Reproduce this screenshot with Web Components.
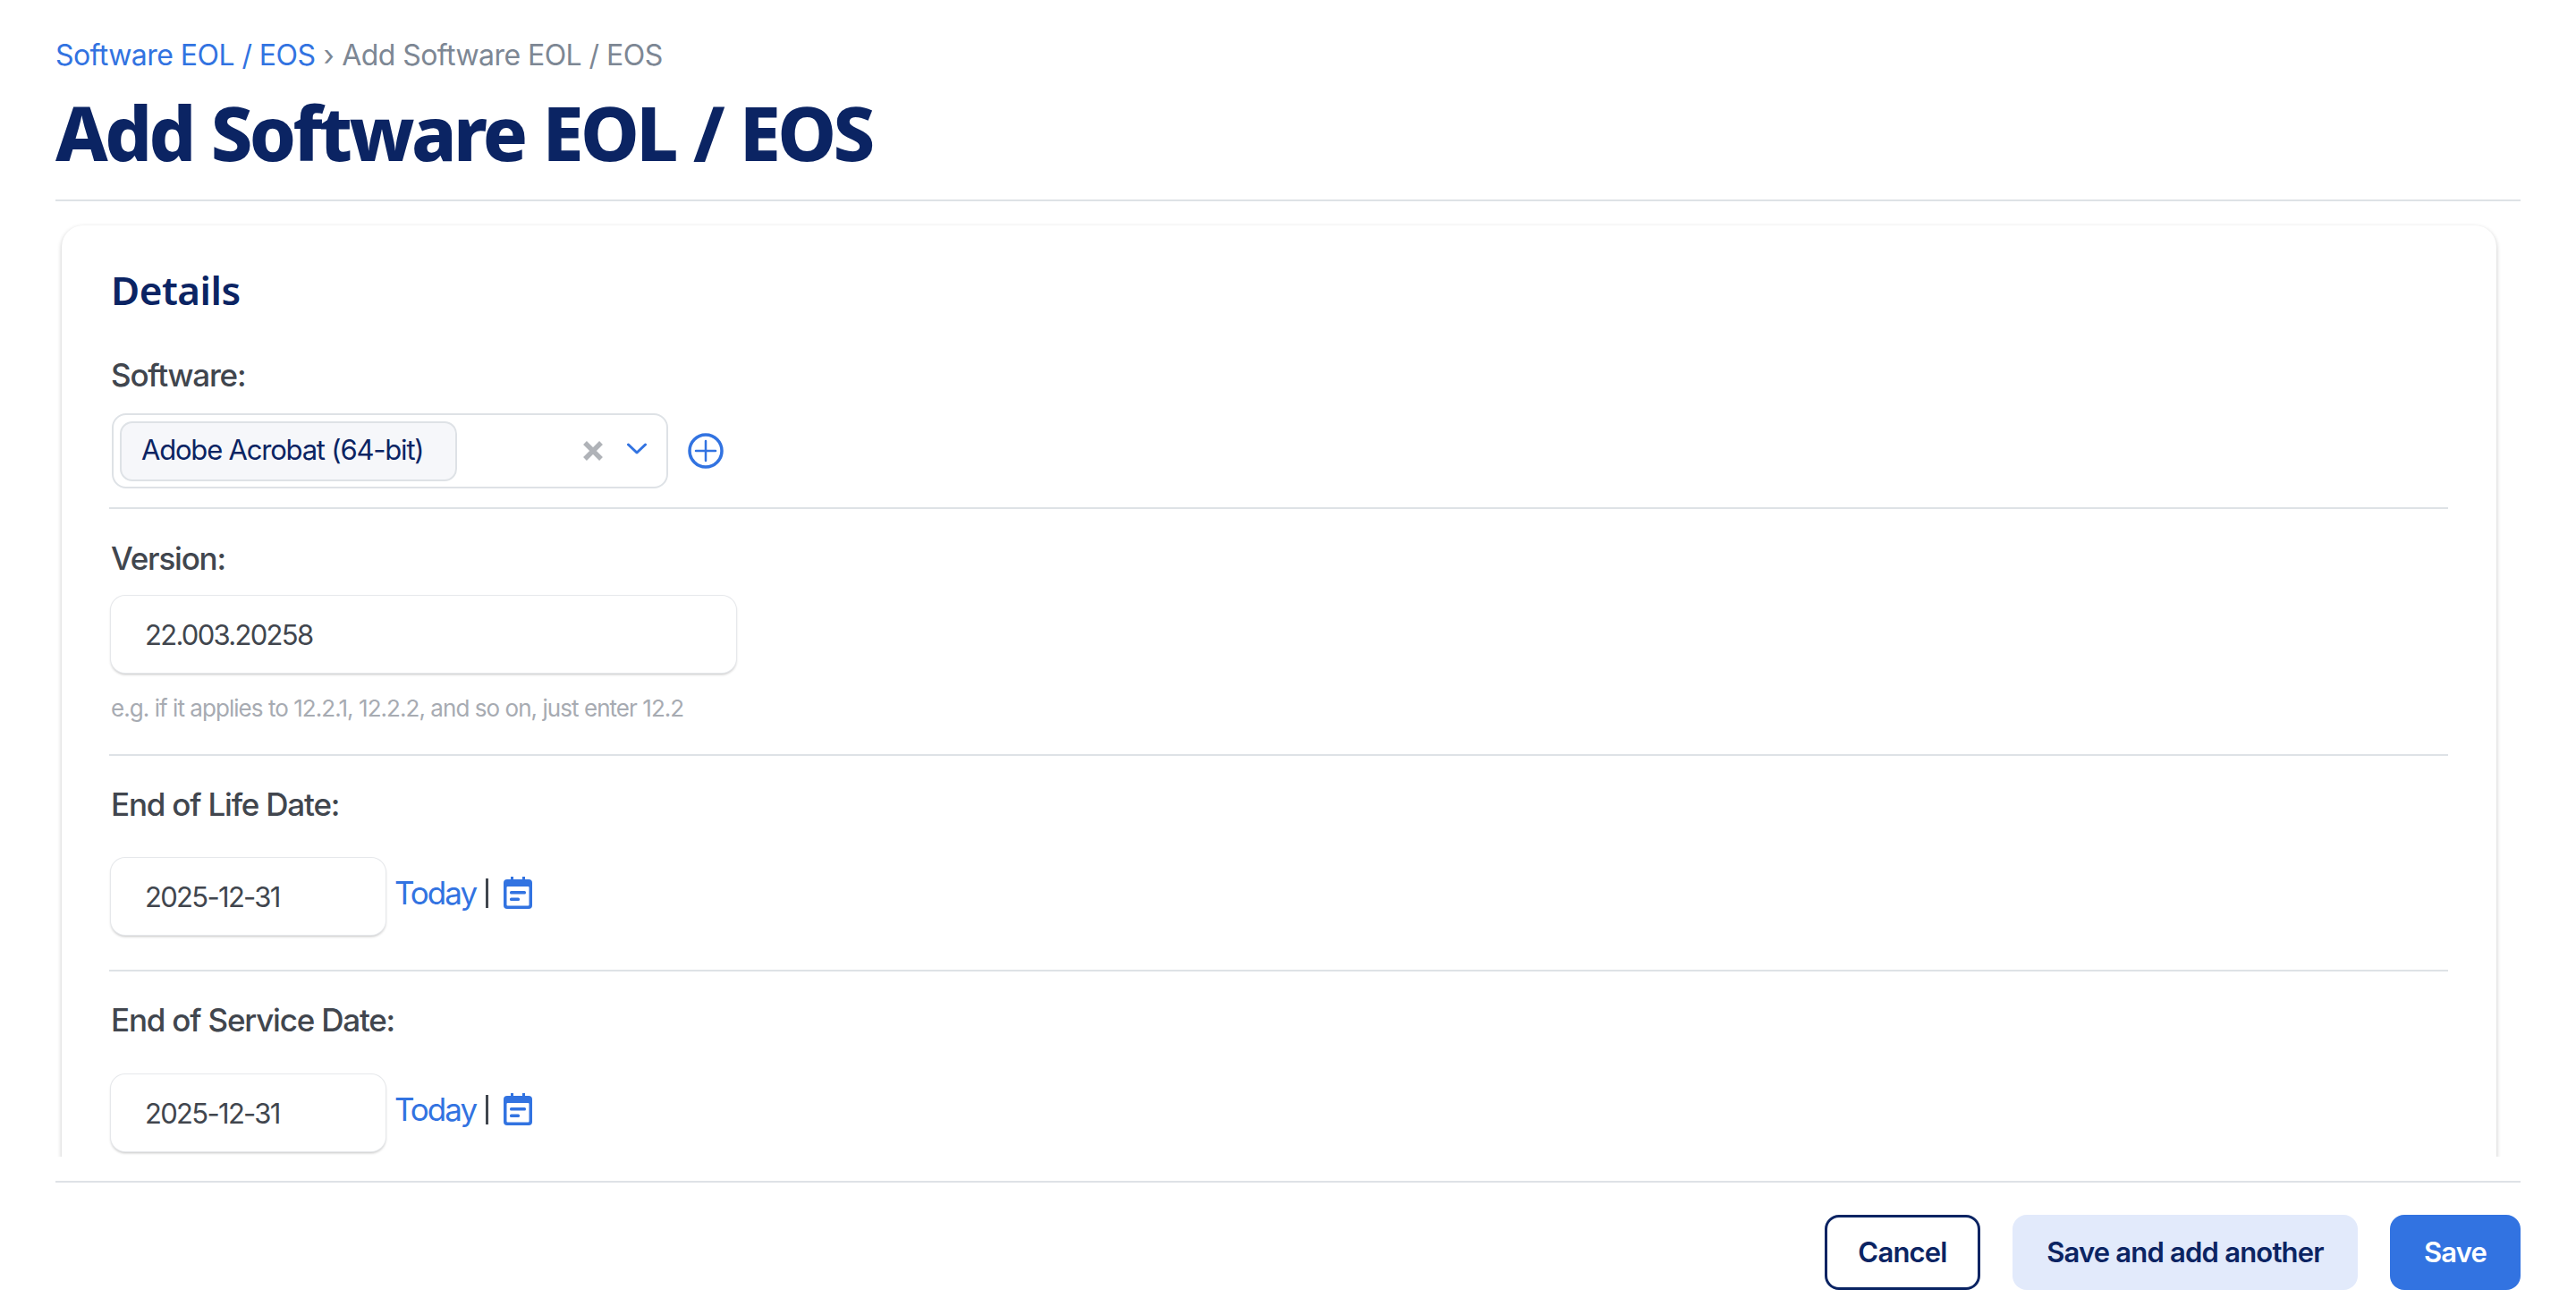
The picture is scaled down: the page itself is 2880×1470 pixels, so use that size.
<!DOCTYPE html>
<html lang="en">
<head>
<meta charset="utf-8">
<title>Add Software EOL / EOS</title>
<style>
  html,body{margin:0;height:100%;background:#fff}
  body{font:400 35px/48px Inter,"Noto Sans",sans-serif;color:#41464e}
</style>
</head>
<body>
<eos-page>
  <page-head slot="head" title-text="Add Software EOL / EOS">
    <a slot="crumb">Software EOL / EOS</a>
    <span slot="here">Add Software EOL / EOS</span>
  </page-head>
  <form-card heading="Details">
    <form-field label="Software:" pad-top="0" gap="18" pad-bottom="21">
      <tag-select value="Adobe Acrobat (64-bit)"></tag-select>
    </form-field>
    <form-field label="Version:" pad-top="32" gap="17" pad-bottom="31">
      <text-box value="22.003.20258" width="699"></text-box>
      <div slot="help">e.g. if it applies to 12.2.1, 12.2.2, and so on, just enter 12.2</div>
    </form-field>
    <form-field label="End of Life Date:" pad-top="31" gap="35" pad-bottom="39">
      <date-box value="2025-12-31"></date-box>
    </form-field>
    <form-field label="End of Service Date:" pad-top="31" gap="36" pad-bottom="39" last>
      <date-box value="2025-12-31"></date-box>
    </form-field>
  </form-card>
  <form-actions slot="foot">
    <ui-button kind="outline" w="174">Cancel</ui-button>
    <ui-button kind="soft" w="386">Save and add another</ui-button>
    <ui-button kind="solid" w="146">Save</ui-button>
  </form-actions>
</eos-page>

<script>
// small helper, every element just renders its template once
function shadow(el, html){
  el.attachShadow({mode:'open'}).innerHTML = html;
}

class EosPage extends HTMLElement{
  connectedCallback(){
    shadow(this, `
      <style>
        :host{display:flex;flex-direction:column;height:100vh;padding:0 62px;box-sizing:border-box;overflow:hidden}
        .scroll{height:1068px;flex:none;overflow:hidden;padding:27px 27px 0 7px;box-sizing:border-box}
      </style>
      <slot name="head"></slot>
      <div class="scroll"><slot></slot></div>
      <slot name="foot"></slot>`);
  }
}
customElements.define('eos-page', EosPage);

class PageHead extends HTMLElement{
  connectedCallback(){
    shadow(this, `
      <style>
        :host{display:block;height:225px;box-sizing:border-box;border-bottom:2px solid #dee2e6;padding-top:42px}
        .crumbs{font:400 32px/40px Inter,sans-serif;letter-spacing:-.55px;color:#7d8794;white-space:nowrap}
        ::slotted(a){color:#3273e1}
        .sep{margin:0 9px}
        h1{margin:12px 0 0;font:800 83px/108px "Noto Sans",sans-serif;letter-spacing:-3.6px;word-spacing:2px;color:#0b2463;white-space:nowrap}
      </style>
      <div class="crumbs"><slot name="crumb"></slot><span class="sep">›</span><slot name="here"></slot></div>
      <h1>${this.getAttribute('title-text')}</h1>`);
  }
}
customElements.define('page-head', PageHead);

class FormCard extends HTMLElement{
  connectedCallback(){
    shadow(this, `
      <style>
        :host{display:block;background:#fff;border-radius:24px;padding:42px 54px 40px 53px;
          box-shadow:0 2px 5px rgba(0,0,0,.24)}
        h2{margin:0 0 42px 2px;font:600 44px/60px "Noto Sans",sans-serif;letter-spacing:-.5px;color:#0b2463}
      </style>
      <h2>${this.getAttribute('heading')}</h2>
      <slot></slot>`);
  }
}
customElements.define('form-card', FormCard);

class FormField extends HTMLElement{
  connectedCallback(){
    const a = n => this.getAttribute(n);
    shadow(this, `
      <style>
        :host{display:block;padding:${a('pad-top')}px 0 ${a('pad-bottom')}px 3px;border-bottom:2px solid #dee2e6}
        :host([last]){border-bottom:0}
        label{display:block;height:48px;margin:0 0 ${a('gap')}px -1px;white-space:nowrap;
          font:500 35px/47px Inter,sans-serif;letter-spacing:-1.2px;color:#41464e}
        ::slotted([slot=help]){font:400 26px/40px Inter,sans-serif;letter-spacing:-.95px;color:#a7abb2;margin:20px 0 0 -1px}
      </style>
      <label>${a('label')}</label>
      <slot></slot>
      <slot name="help"></slot>`);
  }
}
customElements.define('form-field', FormField);

class TagSelect extends HTMLElement{
  connectedCallback(){
    shadow(this, `
      <style>
        :host{display:flex;align-items:center;gap:22px}
        .box{width:622px;height:84px;box-sizing:border-box;border:2px solid #dee2e6;border-radius:16px;
          display:flex;align-items:center;padding:0 0 0 7px;background:#fff}
        .tag{width:377px;height:67px;box-sizing:border-box;border:2px solid #dee2e6;border-radius:14px;background:#f6f7fa;
          padding-left:22px;font:400 31px/60px Inter,sans-serif;letter-spacing:-1.2px;color:#0b2463;white-space:nowrap}
        .x{margin-left:140px;display:block}
        .chev{margin-left:26px;margin-top:-6px;display:block}
        .add{display:block}
      </style>
      <div class="box">
        <div class="tag">${this.getAttribute('value')}</div>
        <svg class="x" width="24" height="22" viewBox="0 0 24 22"><path d="M3 2l18 18M21 2L3 20" stroke="#b0b3b8" stroke-width="5.5" fill="none"/></svg>
        <svg class="chev" width="22" height="13" viewBox="0 0 22 13"><path d="M1.500 2l9.500 9 9.500-9" stroke="#3273e1" stroke-width="3" fill="none" stroke-linecap="round" stroke-linejoin="round"/></svg>
      </div>
      <svg class="add" width="40" height="40" viewBox="0 0 40 40"><circle cx="20" cy="20" r="18" stroke="#3273e1" stroke-width="3.500" fill="none"/><path d="M20 9v22M9 20h22" stroke="#3273e1" stroke-width="2.500" stroke-linecap="round"/></svg>`);
  }
}
customElements.define('tag-select', TagSelect);

class TextBox extends HTMLElement{
  connectedCallback(){
    shadow(this, `
      <style>
        :host{display:block;width:${this.getAttribute('width')}px;margin-left:-1px;height:86px;box-sizing:border-box;background:#fff;
          border-radius:16px;padding-left:38px;box-shadow:0 0 0 1px #e6e8eb,0 2px 3px rgba(0,0,0,.24);
          font:400 31px/88px Inter,sans-serif;letter-spacing:-1.7px;color:#41464e;white-space:nowrap}
      </style>${this.getAttribute('value')}`);
  }
}
customElements.define('text-box', TextBox);

class DateBox extends HTMLElement{
  connectedCallback(){
    shadow(this, `
      <style>
        :host{display:flex;align-items:flex-start;gap:10px}
        .today{display:flex;align-items:center;height:72px;margin-top:3px;font:400 35px/48px Inter,sans-serif;letter-spacing:-2px;color:#3273e1}
        .bar{width:3px;height:33px;background:#41464e;margin:0 17px 0 11px}
      </style>
      <text-box value="${this.getAttribute('value')}" width="307"></text-box>
      <div class="today">Today<span class="bar"></span>
        <svg width="32" height="36" viewBox="0 0 32 36">
          <path d="M8 0h3v5H8zM21 0h3v5h-3z" fill="#3273e1"/>
          <rect y="3" width="32" height="33" rx="4" fill="#3273e1"/>
          <rect x="3.500" y="11" width="25" height="21.500" rx="1" fill="#fff"/>
          <rect x="7" y="16" width="18" height="3.500" rx="1.500" fill="#3273e1"/>
          <rect x="7" y="23.500" width="11" height="3.500" rx="1.500" fill="#3273e1"/>
        </svg>
      </div>`);
  }
}
customElements.define('date-box', DateBox);

class FormActions extends HTMLElement{
  connectedCallback(){
    shadow(this, `
      <style>
        :host{display:flex;justify-content:flex-end;gap:36px;border-top:2px solid #dee2e6;padding-top:36px;margin-top:27px}
      </style>
      <slot></slot>`);
  }
}
customElements.define('form-actions', FormActions);

class UiButton extends HTMLElement{
  connectedCallback(){
    shadow(this, `
      <style>
        :host{display:block;width:${this.getAttribute('w')}px;height:84px;box-sizing:border-box;border-radius:16px;
          font:600 31px/84px Inter,sans-serif;letter-spacing:-.8px;text-align:center;white-space:nowrap;color:#0b2463}
        :host([kind=outline]){border:3px solid #0b2463;background:#fff;line-height:78px}
        :host([kind=soft]){background:#e2eafb}
        :host([kind=solid]){background:#3273e1;color:#fff}
      </style>
      <slot></slot>`);
  }
}
customElements.define('ui-button', UiButton);
</script>
</body>
</html>
